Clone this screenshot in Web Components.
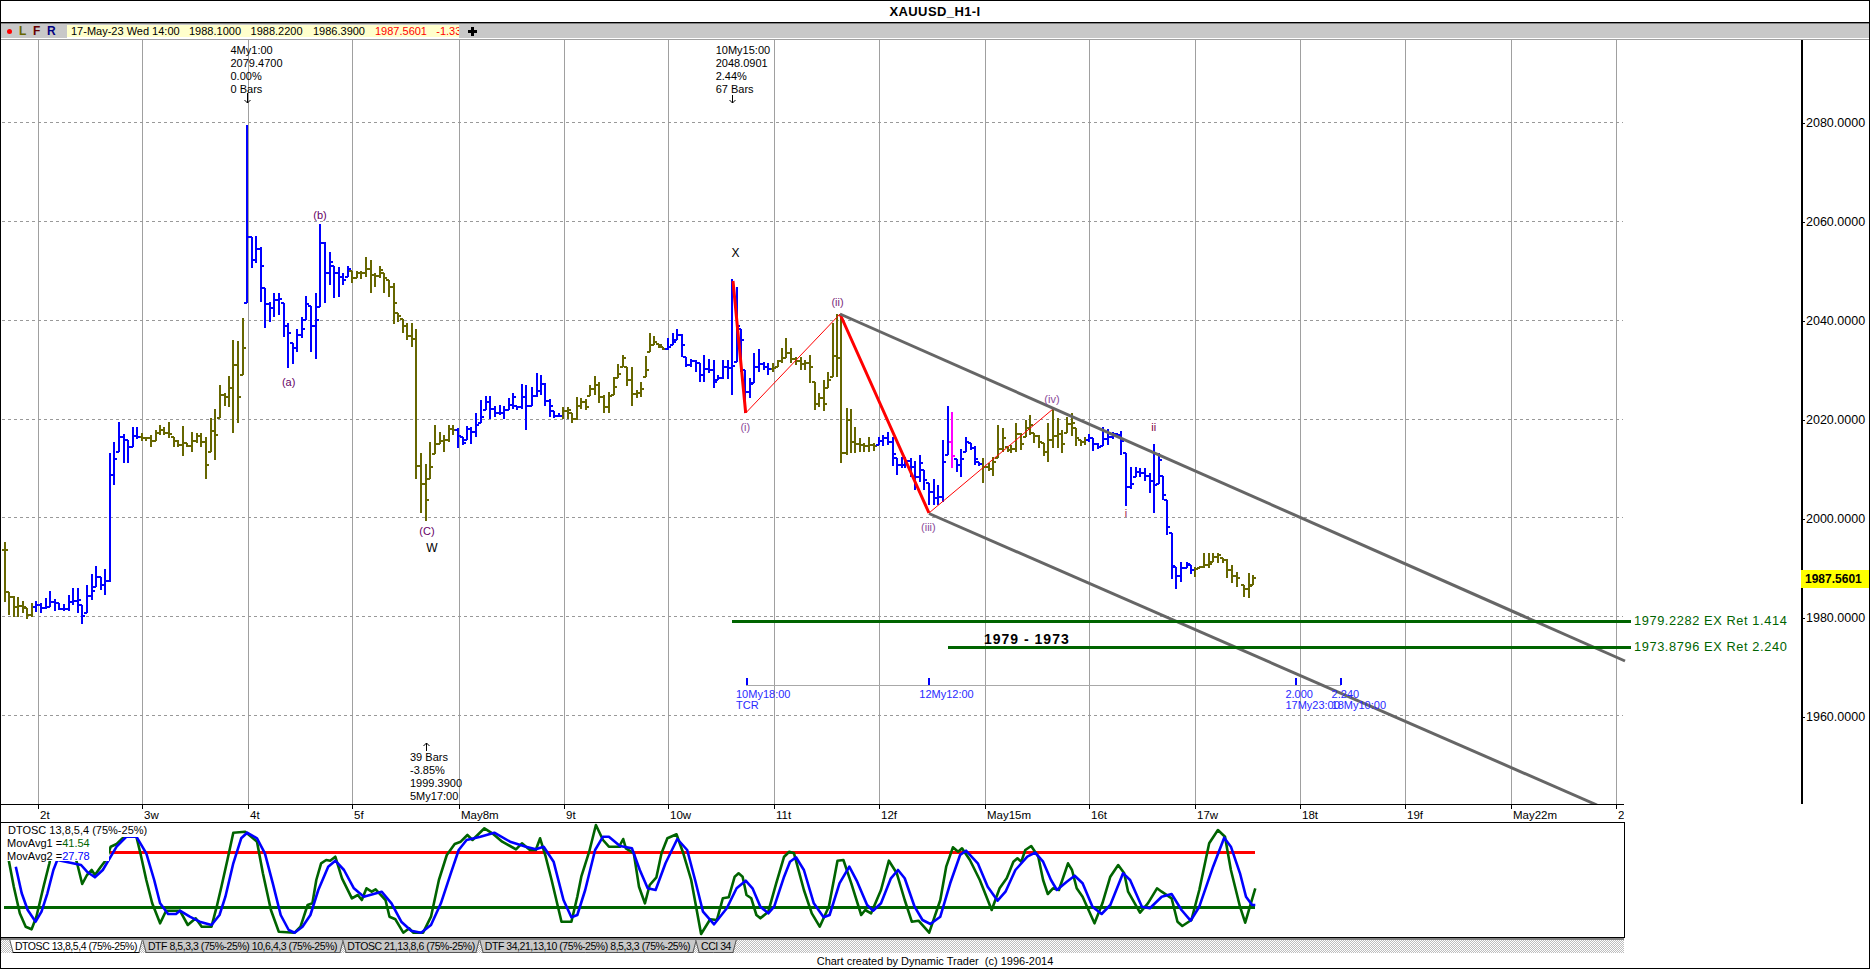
<!DOCTYPE html>
<html lang="en"><head><meta charset="utf-8"><title>XAUUSD_H1-I</title>
<style>
html,body{margin:0;padding:0;background:#fff;overflow:hidden}
body{width:1870px;height:969px;font:11px "Liberation Sans",Arial,sans-serif;color:#000}
</style></head>
<body>
<dt-window>
  <dt-title slot="title">XAUUSD_H1-I</dt-title>
  <dt-toolbar slot="toolbar">
    <span>17-May-23 Wed 14:00</span><span>1988.1000</span><span>1988.2200</span><span>1986.3900</span><span style="color:#f00">1987.5601</span><span style="color:#f00">-1.33</span>
  </dt-toolbar>
  <dt-price-chart slot="chart"></dt-price-chart>
  <dt-time-axis slot="axis"></dt-time-axis>
  <dt-oscillator slot="osc"></dt-oscillator>
  <dt-tabs slot="tabs">
    <dt-tab active style="width:130px">DTOSC 13,8,5,4 (75%-25%)</dt-tab>
    <dt-tab style="width:197px">DTF 8,5,3,3 (75%-25%) 10,6,4,3 (75%-25%)</dt-tab>
    <dt-tab style="width:134px">DTOSC 21,13,8,6 (75%-25%)</dt-tab>
    <dt-tab style="width:213px">DTF 34,21,13,10 (75%-25%) 8,5,3,3 (75%-25%)</dt-tab>
    <dt-tab style="width:38px">CCI 34</dt-tab>
  </dt-tabs>
  <dt-footer slot="footer">Chart created by Dynamic Trader&nbsp; (c) 1996-2014</dt-footer>
</dt-window>
<script>
const FONT='"Liberation Sans",Arial,sans-serif';
const GRIDX=[38,142,248,352,459,564,668,774,879,985,1089,1195,1300,1405,1511,1616];
const LEVELS=[[2080,122],[2060,221],[2040,320],[2020,419],[2000,517],[1980,616],[1960,715]];
function shadow(el,html){const r=el.attachShadow({mode:'open'});r.innerHTML=html;return r;}

class DtWindow extends HTMLElement{constructor(){super();shadow(this,`<style>
:host{display:flex;flex-direction:column;position:relative;width:1870px;height:969px;background:#fff;overflow:hidden;font:11px ${FONT}}
.frame{position:absolute;inset:0;border:1px solid #000;pointer-events:none;z-index:9}
</style><slot name="title"></slot><slot name="toolbar"></slot><slot name="chart"></slot><slot name="axis"></slot><slot name="osc"></slot><slot name="tabs"></slot><slot name="footer"></slot><div class="frame"></div>`);}}
customElements.define('dt-window',DtWindow);

class DtTitle extends HTMLElement{constructor(){super();shadow(this,`<style>
:host{display:flex;align-items:center;justify-content:center;height:22px;border-bottom:1px solid #000;font:bold 13px ${FONT};letter-spacing:.4px;color:#000}
</style><slot></slot>`);}}
customElements.define('dt-title',DtTitle);

class DtToolbar extends HTMLElement{constructor(){super();shadow(this,`<style>
:host{display:flex;align-items:center;height:14px;background:#c8c8c8;border-top:1px solid #808080;border-bottom:1px solid #fff;font:11px ${FONT}}
.left{display:flex;align-items:center;width:67px;box-sizing:border-box;font:bold 12px ${FONT};padding-left:7px}
.dot{width:5px;height:5px;border-radius:50%;background:#f00;margin-right:7px}
.l{color:#666600;width:14px}.f{color:#660000;width:14px}.r{color:#000080}
.quote{width:392px;height:13px;box-sizing:border-box;padding-left:4px;background:#ffffcc;border-bottom:1px solid #fff;overflow:hidden;display:grid;grid-template-columns:118px 61.6px 62.4px 62px 61.3px 1fr;align-items:center;white-space:nowrap;line-height:12px}
.plus{margin-left:9px;position:relative;width:9px;height:9px;background:linear-gradient(#000,#000) center/9px 3px no-repeat,linear-gradient(#000,#000) center/3px 9px no-repeat}
</style><div class="left"><span class="dot"></span><span class="l">L</span><span class="f">F</span><span class="r">R</span></div><div class="quote"><slot></slot></div><span class="plus"></span>`);}}
customElements.define('dt-toolbar',DtToolbar);

/* ---- price bars traced per bar: [x, high, low, close?] in trace frames ---- */
const OL='#666600',BL='#0000ff',MG='#ff00ff';
const SEG=[
{ox:0,oy:320,sx:2.529,sy:3,c:OL,b:[[12,665,845,690],[22,815,885],[35,828,892],[45,832,892],[57,842,880],[68,865,898],[80,850,890]]},
{ox:0,oy:320,sx:2.529,sy:3,c:BL,b:[[92,842,875],[103,848,880],[116,835,868],[126,813,862],[139,838,872],[150,848,870],[162,852,872],[174,826,872],[185,805,855],[197,805,880],[207,855,913],[220,796,880],[232,762,840],[242,738,802],[255,770,810],[265,748,824],[278,400,785,465],[288,365,494],[300,306,395],[313,343,430],[324,360,428],[337,322,380],[347,322,358]]},
{ox:0,oy:320,sx:2.529,sy:3,c:OL,b:[[358,340,362],[370,350,362],[381,345,382],[394,330,362],[405,315,345],[416,320,345],[428,305,355],[440,350,380],[450,360,382],[462,318,407],[473,368,382],[486,337,395],[497,338,368],[508,340,382],[521,352,476],[533,295,395],[543,268,420],[556,195,295],[568,220,258],[579,168,262],[590,60,340],[602,62,310],[614,-5,165]]},
{ox:0,oy:0,sx:2.529,sy:3,c:BL,b:[[625,375,908,712],[637,712,805],[648,708,788],[660,742,906],[670,865,985],[682,905,965],[693,880,950],[705,880,945],[717,910,1010],[728,970,1105],[740,1028,1093],[752,988,1055],[763,950,1015],[775,888,960],[787,918,1055],[800,880,1078],[809,672,920,730],[821,725,910],[834,755,855],[845,798,895],[857,802,890],[868,818,855],[880,798,830]]},
{ox:0,oy:0,sx:2.529,sy:3,c:OL,b:[[890,812,850],[902,812,835],[914,812,838],[926,770,830],[938,780,880],[948,818,860],[960,797,835],[972,820,880],[984,840,892],[996,850,972],[1006,938,965],[1018,958,1000],[1030,970,1020],[1042,970,1040]]},
{ox:0,oy:320,sx:2.529,sy:3,c:OL,b:[[1053,28,478,437],[1065,400,580],[1077,432,602],[1088,365,478],[1100,315,402],[1112,335,372],[1122,345,395],[1135,315,365],[1145,315,345]]},
{ox:0,oy:320,sx:2.529,sy:3,c:BL,b:[[1158,325,385],[1170,350,375],[1182,318,360],[1192,320,372],[1204,280,352],[1216,240,308],[1228,228,270],[1240,228,298],[1252,258,292],[1264,255,285],[1275,258,298],[1287,235,270],[1298,220,268],[1308,258,270],[1320,192,268],[1330,195,330],[1345,200,258],[1357,158,230],[1367,165,225],[1378,188,258],[1390,238,290],[1402,272,295],[1414,278,292]]},
{ox:0,oy:320,sx:2.529,sy:3,c:OL,b:[[1425,262,298],[1437,262,298],[1447,280,308],[1459,232,300],[1470,235,268],[1482,238,270],[1493,195,228],[1505,168,225],[1516,185,250],[1528,225,278],[1540,215,280],[1552,172,225],[1564,132,175]]},
{ox:620,oy:320,sx:2.529,sy:3,c:OL,b:[[8,105,140],[18,142,198],[30,142,258],[42,210,235],[53,185,232],[65,108,170],[75,38,95],[87,48,75],[98,72,85],[110,80,90]]},
{ox:620,oy:320,sx:2.529,sy:3,c:BL,b:[[122,55,90],[133,40,75],[145,28,60],[156,42,110],[168,110,142],[180,118,140],[192,120,155],[203,128,185],[213,105,185],[226,118,160],[238,120,205],[248,165,180],[260,120,178],[272,120,178],[283,-122,225],[295,-100,125],[305,28,155],[316,150,278],[328,175,235],[340,100,190],[352,88,155],[364,125,150],[375,128,165]]},
{ox:620,oy:320,sx:2.529,sy:3,c:OL,b:[[388,130,155],[400,120,140],[410,85,130],[421,55,115],[433,85,130],[445,110,135],[457,110,150],[468,120,150],[480,105,190],[492,185,270],[503,218,260],[515,180,272],[527,155,205],[538,10,170],[548,-19,170],[560,-5,430,400],[573,265,405],[583,268,400],[595,322,400],[606,355,395],[618,370,395],[630,350,395],[642,370,392]]},
{ox:620,oy:320,sx:2.529,sy:3,c:BL,b:[[654,350,375],[666,345,378],[678,335,375],[690,350,438],[700,415,465],[712,410,445],[722,412,445],[735,415,470],[747,422,510],[758,405,485],[770,450,510],[782,490,555],[795,478,555],[805,495,555],[817,360,545],[829,258,405]]},
{ox:620,oy:320,sx:2.529,sy:3,c:MG,b:[[839,275,445]]},
{ox:620,oy:320,sx:2.529,sy:3,c:BL,b:[[852,418,455],[862,388,470],[875,352,395],[887,368,390],[897,378,435],[908,425,438]]},
{ox:620,oy:320,sx:2.529,sy:3,c:OL,b:[[918,415,488],[932,430,452],[943,410,468],[956,315,415],[968,325,395],[980,380,395],[990,375,398],[1002,310,395],[1014,340,390],[1026,300,350],[1037,285,345],[1048,340,370],[1060,345,385],[1072,370,408],[1083,310,425],[1095,262,385],[1107,295,385],[1118,330,398],[1130,290,340],[1142,280,348],[1153,325,378],[1165,360,378],[1176,350,375]]},
{ox:620,oy:320,sx:2.529,sy:3,c:BL,b:[[1186,342,365],[1197,355,392],[1210,370,388],[1222,322,378],[1234,328,375],[1246,335,358],[1258,340,352],[1268,332,405],[1279,398,557],[1292,442,508],[1304,442,470],[1316,445,470],[1328,445,482],[1340,458,518],[1351,372,578],[1362,400,492],[1373,468,540],[1384,540,645],[1395,638,778],[1407,740,808],[1420,725,785],[1433,725,745],[1443,735,762]]},
{ox:620,oy:320,sx:2.529,sy:3,c:OL,b:[[1455,740,772],[1467,738,745],[1478,698,745],[1490,698,745],[1500,698,725],[1512,698,728],[1524,715,730],[1536,718,775],[1548,735,790],[1560,755,800]]},
{ox:1240,oy:320,sx:2.489,sy:3,c:OL,b:[[10,795,832],[22,758,835],[32,765,795,775]]}
];
function buildBars(){
  const paths={};let prev=null,n=0;
  for(const s of SEG){
    for(const b of s.b){
      n++;
      const x=Math.round(s.ox+b[0]/s.sx),hi=s.oy+b[1]/s.sy,lo=s.oy+b[2]/s.sy;
      const h=Math.sin(n*12.9898)*43758.5453,f=.2+.6*(h-Math.floor(h));
      const c=b[3]!=null?s.oy+b[3]/s.sy:hi+(lo-hi)*f;
      const o=prev==null?c:Math.min(lo,Math.max(hi,prev));
      const R=v=>Math.round(v);
      paths[s.c]=(paths[s.c]||'')+`M${x} ${R(hi)}V${R(lo)}M${x-3} ${R(o)}H${x}M${x} ${R(c)}H${x+3}`;
      prev=c;
    }
  }
  return Object.entries(paths).map(([c,d])=>`<path d="${d}" stroke="${c}" stroke-width="2" fill="none" shape-rendering="crispEdges"/>`).join('');
}
function label(t,x,y,col,opt={}){
  const tr=opt.center?'transform:translateX(-50%);':'';
  return `<span class="t${opt.cls?' '+opt.cls:''}" style="left:${x}px;top:${y-40-7}px;color:${col||'#000'};${tr}${opt.css||''}">${t}</span>`;
}
function multi(lines,x,y,col){return lines.map((t,i)=>label(t,x,y+i*13,col)).join('');}

class DtPriceChart extends HTMLElement{constructor(){super();
  const grid=GRIDX.map(x=>`<path d="M${x} 40V804"/>`).join('');
  const dash=LEVELS.map(l=>`<path d="M2 ${l[1]}.5H1623"/>`).join('');
  const P='#7a2a7a',Q='#8a4a9a';
  const arrows=[[247,93,103,1],[732,95,103,1],[426,743,751,0]].map(([x,a,b,d])=>d?
    `<path d="M${x}.5 ${a}V${b}M${x-3}.5 ${b-3}L${x}.5 ${b}L${x+3}.5 ${b-3}"/>`:
    `<path d="M${x}.5 ${b}V${a}M${x-3}.5 ${a+3}L${x}.5 ${a}L${x+3}.5 ${a+3}"/>`).join('');
  const prices=LEVELS.map(l=>`<div class="row"><span class="tick"></span>${l[0]}.0000</div>`).join('');
  shadow(this,`<style>
:host{display:flex;height:764px;border-top:1px solid #a0a0a0;background:#fff}
.canvas{position:relative;width:1801px;height:764px;overflow:hidden}
svg{position:absolute;inset:0;display:block}
.t{position:absolute;font:11px/14px ${FONT};white-space:nowrap}
.big{font:bold 14px/14px ${FONT};letter-spacing:1px}
.lvl{font-size:12.8px;letter-spacing:.6px}
.scale{flex:1;position:relative;border-left:2px solid #000;box-sizing:border-box;padding-top:73.5px;font:12.5px/18px ${FONT};color:#000;height:764px}
.row{height:99px;display:flex;align-items:flex-start;white-space:nowrap;margin-left:-1px;line-height:18px}
.tick{width:3px;height:1px;background:#000;margin:9px 1px 0 0}
.tag{position:absolute;left:-2px;right:0;top:530px;height:18px;background:#ffff00;font:bold 12px/18px ${FONT};padding-left:4px;white-space:nowrap}
</style>
<div class="canvas">
<svg width="1801" height="764" viewBox="0 40 1801 764">
<g stroke="#a0a0a0" stroke-width="1" shape-rendering="crispEdges" fill="none">${grid}</g>
<g stroke="#999" stroke-width="1" stroke-dasharray="3 3" shape-rendering="crispEdges" fill="none">${dash}</g>
<g stroke="#a8a8a8" stroke-width="1" shape-rendering="crispEdges"><path d="M746 685.5H1341"/></g>
${buildBars()}
<g fill="none" stroke="#f00">
<path d="M745.7 413L840 314M929 513L1053 409" stroke-width="1"/>
<path d="M733 281L745.7 413M840 314L929 513" stroke-width="3"/>
</g>
<g fill="none" stroke="#666" stroke-width="3">
<path d="M840 314L1625 661"/><path d="M929 513.5L1597 805"/>
</g>
<g fill="none" stroke="#006400" stroke-width="3" shape-rendering="crispEdges">
<path d="M732 621.5H1631M948 647.5H1631"/>
</g>
<g fill="none" stroke="#0000ff" stroke-width="2" shape-rendering="crispEdges">
<path d="M746.5 678V685M929 678V685M1295.5 678V685M1341 678V685"/>
</g>
<g fill="none" stroke="#000" stroke-width="1">${arrows}</g>
</svg>
${multi(['4My1:00','2079.4700','0.00%','0 Bars'],230.5,50)}
${multi(['10My15:00','2048.0901','2.44%','67 Bars'],715.7,50)}
${multi(['39 Bars','-3.85%','1999.3900','5My17:00'],410,757)}
${label('X',735.5,253,'#000',{center:1,css:'font-size:12px;'})}
${label('W',431.8,548,'#000',{center:1,css:'font-size:12px;'})}
${label('(b)',320,215,'#660066',{center:1})}
${label('(a)',288.7,382,'#660066',{center:1})}
${label('(C)',427,530.5,'#660066',{center:1})}
${label('(i)',745.3,426.5,Q,{center:1})}
${label('(ii)',837.5,302,P,{center:1})}
${label('(iii)',928.4,527,Q,{center:1})}
${label('(iv)',1052,399,Q,{center:1})}
${label('i',1126,513,'#a0204a',{center:1})}
${label('ii',1153.8,427,'#800040',{center:1})}
${label('1979 - 1973',984,639,'#000',{cls:'big'})}
${label('1979.2282 EX Ret 1.414',1634,621,'#006400',{cls:'lvl'})}
${label('1973.8796 EX Ret 2.240',1634,647,'#006400',{cls:'lvl'})}
${label('10My18:00',736,694,'#2a2aff')}${label('TCR',736,705,'#2a2aff')}
${label('12My12:00',919.3,694,'#2a2aff')}
${label('2.000',1285.4,694,'#2a2aff')}${label('17My23:00',1285.4,705,'#2a2aff')}
${label('2.240',1331.6,694,'#2a2aff')}${label('18My10:00',1331.6,705,'#2a2aff')}
</div>
<div class="scale">${prices}<div class="tag">1987.5601</div></div>`);
}}
customElements.define('dt-price-chart',DtPriceChart);

class DtTimeAxis extends HTMLElement{constructor(){super();
  const names=['2t','3w','4t','5f','May8m','9t','10w','11t','12f','May15m','16t','17w','18t','19f','May22m','2'];
  const cells=GRIDX.map((x,i)=>{const w=(GRIDX[i+1]||1624)-x;return `<div class="c" style="width:${w}px">${names[i]}</div>`;}).join('');
  shadow(this,`<style>
:host{display:flex;height:17px;border-top:1px solid #000;overflow:hidden;font:11.5px/20px ${FONT};padding-left:38px;box-sizing:content-box;width:1586px}
.c{box-sizing:border-box;padding-left:2px;white-space:nowrap;overflow:hidden;background:linear-gradient(#000,#000) 0 0/1px 4px no-repeat;flex:none}
</style>${cells}`);
}}
customElements.define('dt-time-axis',DtTimeAxis);

const G7=[[22,660],[35,740],[50,820],[65,860],[80,868],[92,830],[110,740],[125,670],[128,650],[190,650],[195,670],[208,732],[220,705],[232,690],[240,705],[255,680],[268,660],[280,620],[295,612],[310,595],[330,578],[345,590],[355,640],[370,720],[385,790],[405,850],[420,812],[455,812],[475,855],[495,835],[510,860],[535,860],[548,800],[560,740],[575,660],[590,578],[620,575],[650,605],[665,700],[685,810],[705,875],[745,878],[760,860],[778,795],[790,790],[800,720],[812,670],[825,660],[835,662],[848,650],[865,715],[890,775],[905,765],[915,780],[927,745],[940,755],[950,748],[975,780],[985,830],[1000,838],[1020,878],[1035,865],[1045,878],[1070,878],[1090,830],[1110,720],[1130,645],[1150,612],[1165,605],[1182,585],[1195,600],[1225,565],[1245,580],[1270,605],[1290,618],[1305,628],[1320,610],[1340,630],[1355,630],[1366,595],[1380,650],[1395,720],[1420,845],[1445,845],[1460,770],[1470,710],[1490,635],[1507,555],[1525,600],[1540,620],[1568,620]];
const G8=[[0,615],[8,597],[15,625],[35,640],[48,740],[63,790],[75,735],[92,712],[105,640],[120,595],[143,583],[160,640],[180,720],[205,882],[228,838],[245,840],[260,775],[275,772],[290,710],[300,700],[310,710],[320,765],[332,775],[345,825],[355,835],[375,815],[395,730],[415,650],[428,635],[440,640],[465,750],[485,820],[505,860],[528,800],[550,662],[565,660],[585,730],[610,825],[620,810],[635,820],[660,750],[680,662],[700,700],[720,780],[738,845],[755,842],[782,878],[810,780],[825,680],[842,622],[855,635],[865,625],[885,660],[910,720],[940,810],[960,745],[978,715],[995,665],[1005,655],[1015,665],[1025,630],[1040,618],[1058,650],[1070,720],[1082,762],[1095,745],[1110,750],[1133,670],[1143,690],[1155,745],[1170,770],[1200,850],[1220,790],[1240,710],[1260,675],[1275,700],[1285,755],[1315,818],[1335,790],[1358,745],[1370,755],[1395,775],[1410,845],[1422,858],[1445,840],[1465,750],[1490,610],[1512,570],[1530,590],[1545,690],[1568,800]];
const G9=[[0,800],[13,848],[38,745]];
const B7=[[40,680],[55,760],[70,810],[90,845],[105,815],[120,760],[135,690],[145,660],[205,675],[220,695],[240,712],[260,690],[280,650],[295,620],[320,590],[345,590],[370,640],[390,720],[405,790],[425,822],[445,822],[455,812],[480,830],[505,845],[535,855],[555,825],[570,770],[590,670],[610,595],[625,578],[650,595],[670,640],[690,730],[710,825],[730,870],[745,878],[765,860],[785,825],[805,750],[830,680],[848,662],[870,690],[895,745],[920,770],[965,755],[990,790],[1015,845],[1040,872],[1065,878],[1090,855],[1115,790],[1140,700],[1160,630],[1180,600],[1215,590],[1250,578],[1290,605],[1330,620],[1355,628],[1375,620],[1400,665],[1425,780],[1445,832],[1460,825],[1480,750],[1505,630],[1525,590],[1540,590],[1568,618]];
const B8=[[0,618],[30,625],[50,690],[70,745],[90,750],[115,670],[145,597],[170,630],[190,720],[210,815],[238,853],[270,805],[295,745],[318,722],[335,745],[355,800],[375,820],[390,800],[415,710],[430,665],[445,652],[465,690],[490,790],[515,832],[530,825],[555,730],[580,680],[600,725],[625,795],[640,812],[660,790],[685,715],[703,690],[720,715],[745,800],[765,840],[785,852],[810,830],[835,730],[860,645],[875,632],[905,670],[930,740],[955,782],[975,755],[1000,690],[1030,650],[1050,638],[1070,665],[1090,720],[1105,750],[1130,725],[1150,707],[1170,730],[1195,800],[1218,822],[1240,795],[1272,700],[1290,720],[1320,800],[1340,805],[1370,770],[1395,762],[1420,810],[1443,842],[1465,800],[1500,680],[1528,593],[1545,620],[1568,700]];
const B9=[[0,700],[15,770],[30,795],[38,795]];
function line(...groups){const pts=[];for(const [a,ox,sx] of groups)for(const [x,y] of a)pts.push((ox+x/sx).toFixed(1)+','+(640+y/3).toFixed(1));return pts.join(' ');}

class DtOscillator extends HTMLElement{constructor(){super();
  shadow(this,`<style>
:host{display:block;position:relative;width:1625px;height:116px;box-sizing:border-box;border-top:1px solid #000;border-right:1px solid #000;border-bottom:1px solid #000;overflow:hidden;background:#fff}
svg{display:block;position:absolute;inset:0}
.leg{position:absolute;background:#fff;font:11px/12px ${FONT};white-space:nowrap;color:#000}
.g{color:#006400}.b{color:#0000ff}
</style>
<svg width="1624" height="114" viewBox="0 823 1624 114">
<g fill="none" stroke-width="3" shape-rendering="crispEdges"><path d="M110 852.5H1255" stroke="#f00"/><path d="M4 907.5H1255" stroke="#006400"/></g>
<g fill="none" stroke-width="2.6" stroke-linejoin="round">
<polyline points="${line([G7,0,2.529],[G8,620,2.529],[G9,1240,2.489])}" stroke="#006400"/>
<polyline points="${line([B7,0,2.529],[B8,620,2.529],[B9,1240,2.489])}" stroke="#0000ff"/>
</g></svg>
<div class="leg" style="left:8px;top:1px;height:13px;line-height:13px;width:142px">DTOSC 13,8,5,4 (75%-25%)</div>
<div class="leg" style="left:6px;top:14px;width:103px;height:24px;line-height:13px;padding-left:1px;box-sizing:border-box">MovAvg1 =<span class="g">41.54</span><br>MovAvg2 =<span class="b">27.78</span></div>`);
}}
customElements.define('dt-oscillator',DtOscillator);

class DtTabs extends HTMLElement{constructor(){super();shadow(this,`<style>
:host{display:flex;gap:3px;height:13px;box-sizing:content-box;padding-left:11px;width:1613px;border-top:2px solid #808080;margin-bottom:1px;
background:repeating-conic-gradient(#bdbdbd 0 25%,#fff 0 50%) 0 0/2px 2px}
</style><slot></slot>`);}}
customElements.define('dt-tabs',DtTabs);

class DtTab extends HTMLElement{constructor(){super();shadow(this,`<style>
:host{display:flex;position:relative;align-items:center;justify-content:center;height:13px;font:10.5px/13px ${FONT};letter-spacing:-.45px;white-space:nowrap;z-index:0;--bg:#c8c8c8}
:host([active]){--bg:#fff;z-index:1}
.e{position:absolute;top:0;width:50%;background:var(--bg);border-bottom:1px solid #555;z-index:-1;box-sizing:content-box;height:12px}
.a{left:0;border-left:1px solid #555;transform:skewX(15deg)}
.z{right:0;border-right:1px solid #555;transform:skewX(-15deg)}
:host([active]) .e{border-bottom-color:#000}
</style><span class="e a"></span><span class="e z"></span><slot></slot>`);}}
customElements.define('dt-tab',DtTab);

class DtFooter extends HTMLElement{constructor(){super();shadow(this,`<style>
:host{display:flex;justify-content:center;align-items:center;height:14px;font:11px/14px ${FONT};color:#000}
</style><slot></slot>`);}}
customElements.define('dt-footer',DtFooter);
</script>
</body></html>
